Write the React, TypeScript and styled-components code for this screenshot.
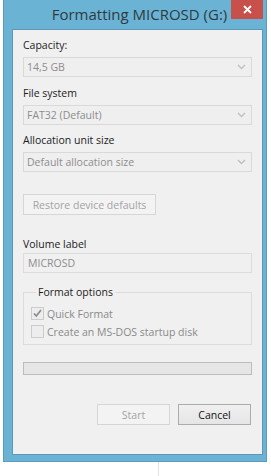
import React from "react";
import styled, { createGlobalStyle } from "styled-components";

const Global = createGlobalStyle`
  html, body { margin: 0; padding: 0; background: #ffffff; overflow: hidden; }
  body { font-family: "Segoe UI", "Open Sans", "Noto Sans", sans-serif; }
`;

const Page = styled.div`
  position: relative;
  width: 271px;
  height: 476px;
  background: #ffffff;
`;

const Backdrop = styled.div`
  position: absolute;
  left: 158px;
  top: 462px;
  width: 1px;
  height: 14px;
  background: #e4e4e4;
`;

const Window = styled.div`
  margin-left: 3px;
  width: 264px;
  height: 462px;
  box-sizing: border-box;
  background: #6bb3d5;
  border: 1px solid #5a9dbf;
  border-top: none;
  display: flex;
  flex-direction: column;
  padding: 0 3px 6px 8px;
`;

const TitleBar = styled.div`
  position: relative;
  height: 29px;
  flex: none;
  display: flex;
  align-items: flex-start;
  justify-content: center;
`;

const Title = styled.div`
  margin-top: 4px;
  padding-left: 4px;
  font-family: "Open Sans", sans-serif;
  font-size: 15px;
  line-height: 20px;
  color: #2f3a40;
  white-space: nowrap;
`;

const CloseButton = styled.div`
  position: absolute;
  top: 0;
  right: 0;
  width: 32px;
  height: 19px;
  background: #c8504b;
  display: flex;
  align-items: center;
  justify-content: center;
`;

const Client = styled.div`
  flex: 1;
  background: #f0f0f0;
  border: 1px solid #5e98b6;
  box-sizing: border-box;
  padding: 7px 10px 0 10px;
  display: flex;
  flex-direction: column;
  font-size: 10.5px;
`;

const Label = styled.div<{ $gap?: number }>`
  margin-top: ${(p) => p.$gap ?? 0}px;
  line-height: 16px;
  height: 16px;
  color: #1c1c1c;
  white-space: nowrap;
`;

const Combo = styled.div<{ $gap?: number }>`
  margin-top: ${(p) => p.$gap ?? 4}px;
  height: 20px;
  box-sizing: border-box;
  border: 1px solid #d9d9d9;
  background: #efefef;
  display: flex;
  align-items: center;
  justify-content: space-between;
  padding: 0 5px 0 3px;
  color: #8d8d8d;
  white-space: nowrap;
`;

const TextBox = styled(Combo)`
  background: #f0f0f0;
  border-color: #dcdcdc;
  padding-left: 4px;
`;

const Button = styled.div<{ $disabled?: boolean; $width: number }>`
  width: ${(p) => p.$width}px;
  height: 21px;
  box-sizing: border-box;
  border: 1px solid ${(p) => (p.$disabled ? "#d6d6d6" : "#acacac")};
  background: ${(p) =>
    p.$disabled ? "#f3f3f3" : "linear-gradient(#f0f0f0, #e5e5e5)"};
  color: ${(p) => (p.$disabled ? "#a3a3a3" : "#111111")};
  display: flex;
  align-items: center;
  justify-content: center;
  white-space: nowrap;
`;

const RestoreRow = styled.div`
  margin-top: 22px;
  display: flex;
`;

const GroupBox = styled.fieldset`
  margin: 12px 0 0 0;
  padding: 8px 0 10px 7px;
  height: 60px;
  box-sizing: border-box;
  border: 1px solid #dcdcdc;
  display: flex;
  flex-direction: column;
  gap: 5px;
  min-width: 0;
`;

const Legend = styled.legend`
  padding: 0 2px 0 2px;
  margin-left: 5px;
  line-height: 14px;
  color: #1c1c1c;
`;

const CheckRow = styled.div`
  display: flex;
  align-items: center;
  gap: 3px;
  height: 13px;
  color: #8a8a8a;
  white-space: nowrap;
`;

const Box = styled.div`
  width: 13px;
  height: 13px;
  box-sizing: border-box;
  border: 1px solid #cccccc;
  background: #ededed;
  display: flex;
  align-items: center;
  justify-content: center;
`;

const Progress = styled.div`
  margin-top: 17px;
  height: 13px;
  box-sizing: border-box;
  border: 1px solid #bcbcbc;
  background: #e6e6e6;
`;

const ButtonRow = styled.div`
  margin-top: 29px;
  display: flex;
  justify-content: flex-end;
  gap: 8px;
  padding-right: 1px;
`;

const Chevron = () => (
  <svg width="9" height="6" viewBox="0 0 9 6">
    <path d="M1 1 L4.5 4.5 L8 1" fill="none" stroke="#bfbfbf" strokeWidth="1.4" />
  </svg>
);

const Check = () => (
  <svg width="11" height="11" viewBox="0 0 11 11">
    <path d="M2 5.5 L4.3 8 L9 2" fill="none" stroke="#8c8c8c" strokeWidth="1.7" />
  </svg>
);

const CloseX = () => (
  <svg width="9" height="9" viewBox="0 0 9 9">
    <path d="M1 1 L8 8 M8 1 L1 8" stroke="#ffffff" strokeWidth="1.8" />
  </svg>
);

export default function App() {
  return (
    <Page>
      <Global />
      <Window>
        <TitleBar>
          <Title>Formatting MICROSD (G:)</Title>
          <CloseButton>
            <CloseX />
          </CloseButton>
        </TitleBar>
        <Client>
          <Label>Capacity:</Label>
          <Combo>
            <span>14,5 GB</span>
            <Chevron />
          </Combo>
          <Label $gap={8}>File system</Label>
          <Combo>
            <span>FAT32 (Default)</span>
            <Chevron />
          </Combo>
          <Label $gap={7}>Allocation unit size</Label>
          <Combo>
            <span>Default allocation size</span>
            <Chevron />
          </Combo>
          <RestoreRow>
            <Button $disabled $width={133}>Restore device defaults</Button>
          </RestoreRow>
          <Label $gap={21}>Volume label</Label>
          <TextBox $gap={1}>MICROSD</TextBox>
          <GroupBox>
            <Legend>Format options</Legend>
            <CheckRow>
              <Box>
                <Check />
              </Box>
              Quick Format
            </CheckRow>
            <CheckRow>
              <Box />
              Create an MS-DOS startup disk
            </CheckRow>
          </GroupBox>
          <Progress />
          <ButtonRow>
            <Button $disabled $width={73}>Start</Button>
            <Button $width={73}>Cancel</Button>
          </ButtonRow>
        </Client>
      </Window>
      <Backdrop />
    </Page>
  );
}
